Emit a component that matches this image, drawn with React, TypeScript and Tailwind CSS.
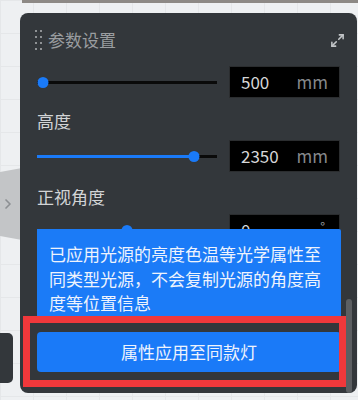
import React from 'react';
import { ChevronRight, Maximize2 } from 'lucide-react';

interface SliderRowProps {
  value: string;
  unit: string;
  percent: number;
  filled?: boolean;
}

const SliderRow: React.FC<SliderRowProps> = ({ value, unit, percent, filled }) => {
  return (
    <div className="flex items-center h-[32px] gap-[12px]">
      <div className="relative w-[180px] h-[12px] flex items-center">
        <div className="w-full h-[3px] bg-[#0a0a0a]" />
        {filled && (
          <div
            className="absolute left-0 h-[3px] bg-[#1a7af8]"
            style={{ width: `${percent}%` }}
          />
        )}
        <div
          className="absolute w-[11px] h-[11px] rounded-full bg-[#1a7af8] -translate-x-1/2"
          style={{ left: `calc(${percent}% + ${percent === 0 ? 6 : 0}px)` }}
        />
      </div>
      <div className="w-[111px] h-[32px] bg-black border border-[#2b2d2f] flex items-center justify-between pl-[11px] pr-[11px]">
        <span className="text-[17px] text-[#d6d7d8]">{value}</span>
        <span className={unit === '°' ? 'text-[13px] text-[#9a9da0] self-start mt-[2px] mr-[3px]' : 'text-[17px] text-[#85888b]'}>
          {unit}
        </span>
      </div>
    </div>
  );
};

const App: React.FC = () => {
  return (
    <div className="relative w-[358px] h-[400px] overflow-hidden bg-[#eef0f2] bg-[linear-gradient(to_right,#e5e7e9_1px,transparent_1px),linear-gradient(to_bottom,#e5e7e9_1px,transparent_1px)] bg-[size:33px_33px] font-['Noto_Sans_CJK_SC','Noto_Sans',sans-serif]">
      {/* strip of the element above */}
      <div className="absolute left-[22px] top-0 w-[336px] h-[3px] bg-[#8d8985]" />

      {/* collapsed side tab */}
      <div className="absolute left-0 top-[168px] w-[22px] h-[72px] bg-[#c3c5c7] [clip-path:polygon(0_4px,100%_0,100%_100%,0_calc(100%-4px))] flex items-center">
        <ChevronRight className="w-[16px] h-[22px] text-[#8c8f92]" strokeWidth={2.5} />
      </div>

      {/* dark block bottom-left */}
      <div className="absolute left-0 top-[333px] w-[13px] h-[50px] bg-[#33373b] rounded-r-[5px]" />

      {/* panel */}
      <div className="absolute left-[20px] top-[13px] w-[337px] h-[380px] bg-[#33373b] rounded-[8px] overflow-hidden">
        <div className="flex items-center justify-between pl-[15px] pr-[12px] pt-[14px] h-[40px]">
          <div className="flex items-center gap-[6px]">
            <div className="grid grid-cols-2 gap-x-[3px] gap-y-[4px]">
              {Array.from({ length: 8 }).map((_, i) => (
                <span key={i} className="w-[2px] h-[2px] bg-[#8f9295]" />
              ))}
            </div>
            <span className="text-[17px] text-[#9a9da0] leading-[24px]">参数设置</span>
          </div>
          <Maximize2 className="w-[15px] h-[15px] text-[#c2c5c8]" strokeWidth={2.5} />
        </div>

        <div className="px-[17px] pt-[13px]">
          <SliderRow value="500" unit="mm" percent={0} />
          <div className="mt-[11px] mb-[7px] text-[17px] leading-[24px] text-[#d2d4d6]">高度</div>
          <SliderRow value="2350" unit="mm" percent={87} filled />
          <div className="mt-[13px] mb-[5px] text-[17px] leading-[24px] text-[#d2d4d6]">正视角度</div>
          <SliderRow value="0" unit="°" percent={50} filled />
        </div>

        {/* tooltip */}
        <div className="absolute left-[17px] top-[216px] w-[304px] h-[90px] bg-[#1b7bf7] rounded-[2px] px-[12px] pt-[13px] text-[17px] leading-[24.5px] text-[#eef3fd]">
          已应用光源的亮度色温等光学属性至同类型光源，不会复制光源的角度高度等位置信息
        </div>

        {/* footer */}
        <div className="absolute left-0 right-0 bottom-0 px-[17px] pb-[21px]">
          <button className="w-[304px] h-[40px] bg-[#1a7af8] rounded-[4px] text-[17px] text-[#eef3fd]">
            属性应用至同款灯
          </button>
        </div>

        {/* highlight */}
        <div className="absolute left-[3px] top-[303px] w-[323px] h-[71px] border-[7px] border-[#f0383b]" />

        {/* scrollbar */}
        <div className="absolute right-[5px] top-[286px] bottom-0 w-[6px] rounded-full bg-[#5c5f62]" />
      </div>
    </div>
  );
};

export default App;
